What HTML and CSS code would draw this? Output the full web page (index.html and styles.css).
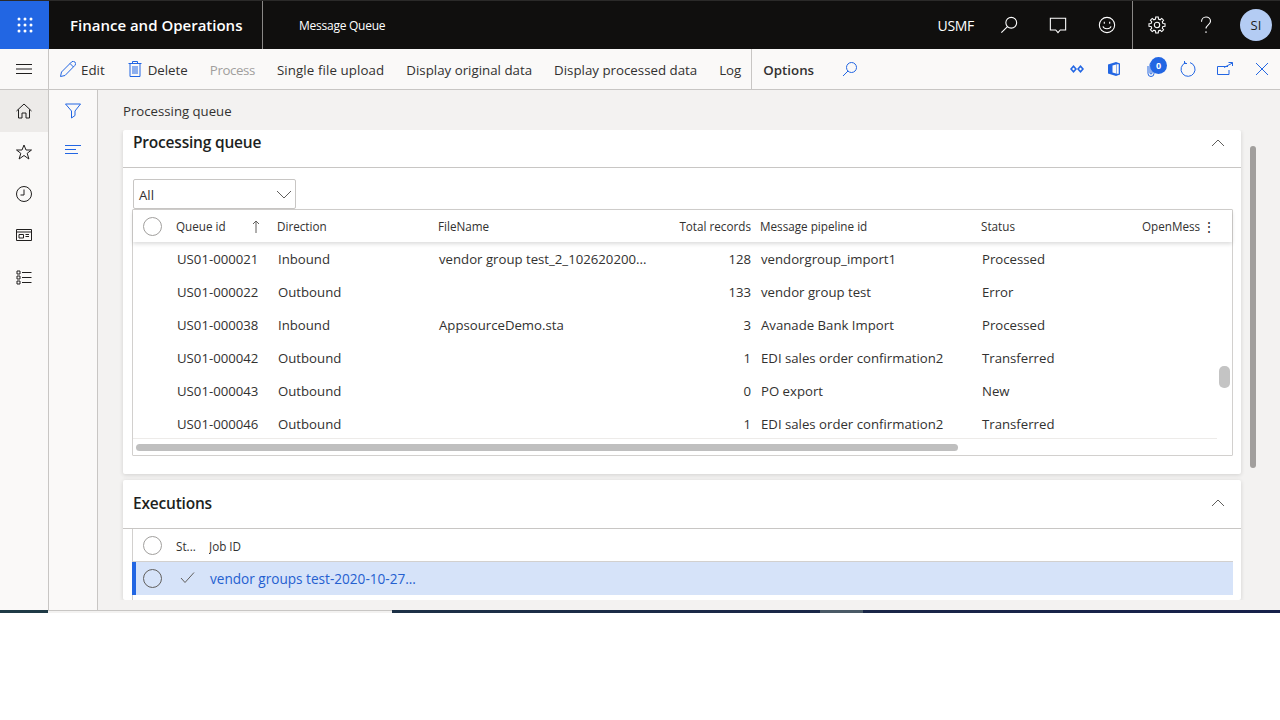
FILE: index.html
```html
<!DOCTYPE html>
<html lang="en">
<head>
    <meta charset="UTF-8">
    <title>Message Queue</title>
    <link rel="stylesheet" href="styles.css">
</head>
<body>
<div class="app">
    <header class="topbar">
        <div class="waffle">
            <svg width="16" height="16" viewBox="0 0 16 16" fill="#fff"><circle cx="2" cy="2" r="1.5"/><circle cx="8" cy="2" r="1.5"/><circle cx="14" cy="2" r="1.5"/><circle cx="2" cy="8" r="1.5"/><circle cx="8" cy="8" r="1.5"/><circle cx="14" cy="8" r="1.5"/><circle cx="2" cy="14" r="1.5"/><circle cx="8" cy="14" r="1.5"/><circle cx="14" cy="14" r="1.5"/></svg>
        </div>
        <div class="brand">Finance and Operations</div>
        <div class="page-name">Message Queue</div>
        <div class="top-right">
            <span class="company">USMF</span>
            <svg class="top-icon" viewBox="0 0 20 20"><circle cx="12.5" cy="7.5" r="6"/><path d="M8.3 11.7 1.5 18.5"/></svg>
            <svg class="top-icon" viewBox="0 0 20 20"><path d="M1.5 2.5h17v13h-6L10 18.5 7.5 15.5h-6z"/></svg>
            <svg class="top-icon" viewBox="0 0 20 20"><circle cx="10" cy="10" r="8.5"/><path d="M5.5 11.5c1 3.5 8 3.5 9 0M7 6.5v2M13 6.5v2"/></svg>
            <div class="top-sep"></div>
            <svg class="top-icon" viewBox="0 0 20 20"><path d="M16.6 8.35 18.9 8.6V11.4L16.6 11.65 15.83 13.5 17.28 15.29 15.29 17.28 13.5 15.83 11.65 16.6 11.4 18.9H8.6L8.35 16.6 6.5 15.83 4.71 17.28 2.72 15.29 4.17 13.5 3.4 11.65 1.1 11.4V8.6L3.4 8.35 4.17 6.5 2.72 4.71 4.71 2.72 6.5 4.17 8.35 3.4 8.6 1.1H11.4L11.65 3.4 13.5 4.17 15.29 2.72 17.28 4.71 15.83 6.5z"/><circle cx="10" cy="10" r="3"/></svg>
            <svg class="top-icon" viewBox="0 0 20 20"><path d="M5 6.5C5 3.5 7.2 1.2 10 1.2s5 2 5 4.6c0 3.9-5 4.2-5 8.2"/><path d="M10 17v2"/></svg>
            <div class="avatar">SI</div>
        </div>
    </header>

    <div class="actionbar">
        <div class="hamburger">
            <svg width="16" height="10" viewBox="0 0 16 10" fill="none" stroke="#201f1e"><path d="M0 .5h16M0 5h16M0 9.500h16"/></svg>
        </div>
        <div class="actions">
            <span class="action">
                <svg class="act-icon" viewBox="0 0 16 16"><path d="M.5 15.500l1-4.500L11.500 1a1.900 1.900 0 0 1 3.400 3.400L5 14.500zM10 2.500l3.500 3.500"/></svg>Edit
            </span>
            <span class="action">
                <svg class="act-icon" viewBox="0 0 16 16"><path d="M1.500 2.500h13M5.500 2.500V.5h5v2M3 2.500v13h10v-13M6 5v8M8 5v8M10 5v8"/></svg>Delete
            </span>
            <span class="action disabled">Process</span>
            <span class="action wide">Single file upload</span>
            <span class="action">Display original data</span>
            <span class="action">Display processed data</span>
            <span class="action log">Log</span>
            <span class="action options">Options</span>
            <svg class="search-icon" viewBox="0 0 16 16"><circle cx="9.500" cy="6.500" r="5"/><path d="M6 10 1 15"/></svg>
        </div>
        <div class="action-right">
            <svg class="right-icon" viewBox="0 0 16 16"><path d="M4.500 4 1 8l3.500 4L8 8zM11.500 4 8 8l3.500 4L15 8z" fill="#2266e3" stroke="none"/><path d="M4.500 6.500 3 8l1.500 1.500L6 8zM11.500 6.500 10 8l1.500 1.500L13 8z" fill="#faf9f8" stroke="none"/></svg>
            <svg class="right-icon" viewBox="0 0 16 16"><path d="M2 3.500 10 1l4 1.500v11L10 15l-8-2.500z" fill="#2266e3" stroke="none"/><path d="M6.500 4.500 10 3.500v9l-3.500-1zM10.500 3.200h2.200v9.600h-2.200z" fill="#faf9f8" stroke="none"/></svg>
            <span class="clip">
                <svg class="right-icon" viewBox="0 0 16 16"><path d="M5 5v7.500a3 3 0 0 0 6 0V3.500a2 2 0 0 0-4 0V12a1 1 0 0 0 2 0V5"/></svg>
                <span class="badge">0</span>
            </span>
            <svg class="right-icon" viewBox="0 0 16 16"><path d="M5.500 1.800a7 7 0 1 0 4.500-.2M4.500 0v2.500H7"/></svg>
            <svg class="right-icon" viewBox="0 0 16 16"><path d="M11 5.500H.5v8H12V9M7 6.500l8.500-4.500M11.500 1.500h4V5"/></svg>
            <svg class="right-icon" viewBox="0 0 16 16"><path d="M2 2l12 12M14 2 2 14"/></svg>
        </div>
    </div>

    <div class="body">
        <nav class="leftnav">
            <div class="nav-item current">
                <svg class="nav-icon" viewBox="0 0 16 16"><path d="M.5 8 8 1l7.500 7M2.500 6.500v8.500h3.500v-5h4v5h3.500V6.500"/></svg>
            </div>
            <div class="nav-item">
                <svg class="nav-icon" viewBox="0 0 16 16"><path d="M8 1l2 5h5.500l-4.300 3.300 1.700 5.700L8 11.500 3.100 15l1.700-5.700L.5 6H6z"/></svg>
            </div>
            <div class="nav-item">
                <svg class="nav-icon" viewBox="0 0 16 16"><circle cx="8" cy="8" r="7.500"/><path d="M8 3.500V9H4.500"/></svg>
            </div>
            <div class="nav-item">
                <svg class="nav-icon" viewBox="0 0 16 16"><path d="M.5 2.500h15v11H.5zM.5 5h15M3 7.500h4.500v3.500H3zM9.500 7.500H13M9.500 9.500H13"/></svg>
            </div>
            <div class="nav-item">
                <svg class="nav-icon" viewBox="0 0 16 16"><path d="M1 2h3v3H1zM1 7h3v3H1zM1 12h3v3H1zM6 3.500h9.500M6 8.500h9.500M6 13.500h9.500"/></svg>
            </div>
        </nav>
        <aside class="filterpane">
            <svg class="pane-icon filter" viewBox="0 0 16 16"><path d="M.5 1h15L10 8v4.500L6.500 15V8z"/></svg>
            <svg class="pane-icon lines" viewBox="0 0 16 10"><path d="M0 .5h16M0 4.500h11M0 8.500h13"/></svg>
        </aside>
        <main class="content">
            <div class="crumb">Processing queue</div>

            <section class="card queue-card">
                <div class="card-head queue-head">
                    <h2>Processing queue</h2>
                    <svg class="chevron" viewBox="0 0 14 8"><path d="M1 7l6-6 6 6"/></svg>
                </div>
                <div class="card-body">
                    <div class="select">
                        <span>All</span>
                        <svg viewBox="0 0 16 9" width="16" height="9" fill="none" stroke="#605e5c"><path d="M1 1l7 7 7-7"/></svg>
                    </div>
                    <div class="grid">
                        <div class="row head-row">
                            <span class="cell check"><i class="radio"></i></span>
                            <span class="cell c-id">Queue id<svg class="sort" width="8" height="13" viewBox="0 0 8 13" fill="none" stroke="#605e5c"><path d="M4 13V1M1 4l3-3 3 3"/></svg></span>
                            <span class="cell c-dir">Direction</span>
                            <span class="cell c-file">FileName</span>
                            <span class="cell c-total">Total records</span>
                            <span class="cell c-pipe">Message pipeline id</span>
                            <span class="cell c-status">Status</span>
                            <span class="cell c-open">OpenMess<b class="dots">⋮</b></span>
                        </div>
                        <div class="row">
                            <span class="cell check"></span>
                            <span class="cell c-id">US01-000021</span>
                            <span class="cell c-dir">Inbound</span>
                            <span class="cell c-file">vendor group test_2_102620200...</span>
                            <span class="cell c-total">128</span>
                            <span class="cell c-pipe">vendorgroup_import1</span>
                            <span class="cell c-status">Processed</span>
                        </div>
                        <div class="row">
                            <span class="cell check"></span>
                            <span class="cell c-id">US01-000022</span>
                            <span class="cell c-dir">Outbound</span>
                            <span class="cell c-file"></span>
                            <span class="cell c-total">133</span>
                            <span class="cell c-pipe">vendor group test</span>
                            <span class="cell c-status">Error</span>
                        </div>
                        <div class="row">
                            <span class="cell check"></span>
                            <span class="cell c-id">US01-000038</span>
                            <span class="cell c-dir">Inbound</span>
                            <span class="cell c-file">AppsourceDemo.sta</span>
                            <span class="cell c-total">3</span>
                            <span class="cell c-pipe">Avanade Bank Import</span>
                            <span class="cell c-status">Processed</span>
                        </div>
                        <div class="row">
                            <span class="cell check"></span>
                            <span class="cell c-id">US01-000042</span>
                            <span class="cell c-dir">Outbound</span>
                            <span class="cell c-file"></span>
                            <span class="cell c-total">1</span>
                            <span class="cell c-pipe">EDI sales order confirmation2</span>
                            <span class="cell c-status">Transferred</span>
                        </div>
                        <div class="row">
                            <span class="cell check"></span>
                            <span class="cell c-id">US01-000043</span>
                            <span class="cell c-dir">Outbound</span>
                            <span class="cell c-file"></span>
                            <span class="cell c-total">0</span>
                            <span class="cell c-pipe">PO export</span>
                            <span class="cell c-status">New</span>
                        </div>
                        <div class="row">
                            <span class="cell check"></span>
                            <span class="cell c-id">US01-000046</span>
                            <span class="cell c-dir">Outbound</span>
                            <span class="cell c-file"></span>
                            <span class="cell c-total">1</span>
                            <span class="cell c-pipe">EDI sales order confirmation2</span>
                            <span class="cell c-status">Transferred</span>
                        </div>
                        <div class="hscroll"><div class="hthumb"></div></div>
                        <div class="vthumb"></div>
                    </div>
                </div>
            </section>

            <section class="card exec-card">
                <div class="card-head exec-head">
                    <h2>Executions</h2>
                    <svg class="chevron" viewBox="0 0 14 8"><path d="M1 7l6-6 6 6"/></svg>
                </div>
                <div class="exec-grid">
                    <div class="row exec-head-row">
                        <span class="cell check"><i class="radio"></i></span>
                        <span class="cell c-st">St...</span>
                        <span class="cell c-job">Job ID</span>
                    </div>
                    <div class="row selected">
                        <span class="cell check"><i class="radio dark"></i></span>
                        <span class="cell c-st">
                            <svg width="15" height="11" viewBox="0 0 15 11" fill="none" stroke="#605e5c"><path d="M1 6l4 4.500L14 .5"/></svg>
                        </span>
                        <span class="cell c-job link">vendor groups test-2020-10-27...</span>
                    </div>
                </div>
            </section>
            <div class="page-scroll"></div>
        </main>
    </div>
</div>
<div class="taskstrip">
    <div class="strip-light"></div>
    <div class="strip-dark"><div class="strip-thumb"></div></div>
</div>
</body>
</html>
```

FILE: styles.css
```css
/* Page */
* {
    box-sizing: border-box;
}

body {
    margin: 0;
    background: #fff;
    font-family: "Open Sans", "Noto Sans", sans-serif;
    font-size: 13.2px;
    color: #323130;
}

.app {
    height: 610px;
    display: flex;
    flex-direction: column;
    overflow: hidden;
}

/* Top bar */
.topbar {
    height: 49px;
    flex: none;
    display: flex;
    align-items: center;
    background: #100f0e;
    border-top: 1px solid #2b2a29;
    color: #fff;
}

.waffle {
    width: 49px;
    height: 48px;
    display: flex;
    align-items: center;
    justify-content: center;
    background: #2266e3;
}

.brand {
    width: 214px;
    height: 48px;
    line-height: 48px;
    padding-left: 21px;
    border-right: 1px solid #8a8886;
    font-size: 15px;
    font-weight: 600;
}

.page-name {
    margin-left: 36px;
    font-size: 12px;
    letter-spacing: -0.25px;
}

.top-right {
    margin-left: auto;
    height: 48px;
    display: flex;
    align-items: center;
}

.company {
    margin-right: 26px;
    font-size: 14px;
    letter-spacing: -0.3px;
}

.top-icon {
    width: 18px;
    height: 18px;
    margin-right: 31px;
    fill: none;
    stroke: #fff;
    stroke-width: 1.2;
}

.top-sep {
    width: 1px;
    height: 48px;
    background: #8a8886;
    margin: 0 15px 0 -15px;
}

.avatar {
    width: 32px;
    height: 32px;
    margin: 0 8px 0 -6px;
    border-radius: 50%;
    background: #b4ccf4;
    color: #201f1e;
    font-size: 13px;
    line-height: 32px;
    text-align: center;
}

/* Action bar */
.actionbar {
    height: 41px;
    flex: none;
    display: flex;
    align-items: center;
    background: #faf9f8;
    border-bottom: 1px solid #c8c6c4;
}

.hamburger {
    width: 49px;
    height: 40px;
    display: flex;
    align-items: center;
    justify-content: center;
    border-right: 1px solid #c8c6c4;
}

.actions {
    display: flex;
    align-items: center;
    height: 40px;
    padding-left: 11px;
    font-size: 13.3px;
}

.action {
    display: flex;
    align-items: center;
    padding-top: 2px;
    margin-right: 22px;
    color: #323130;
    white-space: nowrap;
}

.action.disabled {
    color: #a19f9d;
    letter-spacing: -0.4px;
}

.action.wide {
    letter-spacing: 0.1px;
}

.action.log {
    margin-right: 21px;
}

.action.options {
    height: 40px;
    padding-left: 11px;
    margin-left: -11px;
    border-left: 1px solid #c8c6c4;
    font-weight: 600;
    margin-right: 28px;
}

.act-icon {
    width: 16px;
    height: 16px;
    margin-top: -2px;
    margin-right: 5px;
    fill: none;
    stroke: #2266e3;
}

.search-icon {
    width: 16px;
    height: 16px;
    fill: none;
    stroke: #2266e3;
}

.action-right {
    margin-left: auto;
    display: flex;
    align-items: center;
    padding-right: 10px;
}

.right-icon {
    width: 16px;
    height: 16px;
    margin-left: 21px;
    fill: none;
    stroke: #2266e3;
}

.clip {
    position: relative;
    display: flex;
}

.badge {
    position: absolute;
    top: -4px;
    right: -8px;
    width: 17px;
    height: 17px;
    border-radius: 50%;
    background: #2266e3;
    color: #fff;
    font-size: 9px;
    font-weight: 700;
    line-height: 17px;
    text-align: center;
}

/* Body columns */
.body {
    flex: 1;
    display: flex;
    min-height: 0;
}

.leftnav {
    width: 49px;
    flex: none;
    background: #faf9f8;
    border-right: 1px solid #c8c6c4;
}

.nav-item {
    height: 41.5px;
    display: flex;
    align-items: center;
    justify-content: center;
}

.nav-item.current {
    background: #edebe9;
}

.nav-icon {
    width: 16px;
    height: 16px;
    fill: none;
    stroke: #201f1e;
}

.filterpane {
    width: 49px;
    flex: none;
    display: flex;
    flex-direction: column;
    align-items: center;
    padding-top: 13px;
    background: #faf9f8;
    border-right: 1px solid #c8c6c4;
}

.pane-icon {
    width: 16px;
    fill: none;
    stroke: #2266e3;
}

.pane-icon.filter {
    height: 16px;
    margin-bottom: 26px;
}

.pane-icon.lines {
    height: 10px;
}

/* Content */
.content {
    position: relative;
    flex: 1;
    min-width: 0;
    padding: 0 39px 0 25px;
    background: #f3f2f1;
}

.crumb {
    height: 40px;
    padding-top: 11px;
    line-height: 20px;
}

.card {
    background: #fff;
    box-shadow: 0 1px 4px rgba(0, 0, 0, 0.14);
    border-radius: 2px;
}

.queue-card {
    height: 344px;
    margin-bottom: 6px;
    clip-path: inset(0 -5px -5px -5px);
}

.exec-card {
    height: 120px;
    overflow: hidden;
    clip-path: inset(-5px -5px 0 -5px);
}

.card-head {
    display: flex;
    align-items: center;
    justify-content: space-between;
    padding: 0 16px 0 10px;
    border-bottom: 1px solid #c8c6c4;
}

.card-head h2 {
    margin: 0;
    font-size: 15.5px;
    font-weight: 600;
    color: #201f1e;
    letter-spacing: -0.2px;
}

.queue-head {
    height: 38px;
    align-items: flex-start;
    padding-top: 1px;
}

.queue-head .chevron {
    margin-top: 8px;
}

.exec-head {
    height: 49px;
    padding-bottom: 2px;
}

.chevron {
    width: 14px;
    height: 8px;
    fill: none;
    stroke: #605e5c;
}

.card-body {
    padding: 11px 8px 0 9px;
}

.select {
    width: 163px;
    height: 30px;
    margin-left: 1px;
    padding: 1px 3px 0 5px;
    display: flex;
    align-items: center;
    justify-content: space-between;
    border: 1px solid #c8c6c4;
    border-radius: 2px;
}

/* Grids */
.grid {
    position: relative;
    height: 247px;
    border: 1px solid #d2d0ce;
    border-radius: 1px;
}

.row {
    height: 33px;
    display: flex;
    align-items: center;
    white-space: nowrap;
}

.head-row {
    height: 32px;
    font-size: 11.7px;
    box-shadow: 0 2px 4px rgba(0, 0, 0, 0.14);
}

.cell {
    flex: none;
    display: block;
    overflow: hidden;
}

.check {
    width: 43px;
    padding-left: 10px;
    display: flex;
    align-items: center;
}

.radio {
    display: block;
    width: 19px;
    height: 19px;
    border: 1px solid #a19f9d;
    border-radius: 50%;
    background: #fff;
}

.radio.dark {
    border-color: #605e5c;
    background: transparent;
}

.c-id {
    width: 101px;
}

.head-row .c-id {
    display: flex;
    align-items: center;
}

.sort {
    margin-left: 26px;
}

.c-dir {
    width: 161px;
}

.c-file {
    width: 222px;
}

.c-total {
    width: 91px;
    text-align: right;
}

.c-pipe {
    width: 221px;
    margin-left: 9px;
}

.c-status {
    width: 161px;
}

.c-open {
    display: flex;
    align-items: center;
    overflow: visible;
}

.dots {
    margin-left: 2px;
    font-weight: 400;
    font-size: 14px;
}

.row:not(.head-row) .c-id,
.row:not(.head-row) .c-dir,
.row:not(.head-row) .c-file,
.row:not(.head-row) .c-pipe,
.row:not(.head-row) .c-status {
    padding-left: 1px;
}

.hscroll {
    position: absolute;
    left: 0;
    right: 15px;
    bottom: 0;
    height: 17px;
    padding-top: 5px;
    padding-left: 3px;
    background: #fff;
    border-top: 1px solid #edebe9;
}

.hthumb {
    width: 822px;
    height: 7px;
    border-radius: 4px;
    background: #bfbfbf;
}

.vthumb {
    position: absolute;
    top: 156px;
    right: 2px;
    width: 11px;
    height: 22px;
    border-radius: 5px;
    background: #c4c4c4;
}

.exec-grid {
    height: 71px;
    margin: 0 8px 0 9px;
    border-left: 1px solid #d2d0ce;
}

.exec-head-row {
    height: 33px;
    padding-top: 1px;
    font-size: 11.7px;
    border-bottom: 1px solid #d2d0ce;
}

.c-st {
    width: 33px;
}

.c-job {
    width: 300px;
}

.selected {
    background: #d6e3f9;
    margin-left: -1px;
    border-left: 4px solid #2266e3;
}

.selected .check {
    width: 40px;
    padding-left: 7px;
}

.selected .c-st {
    padding-left: 4px;
    padding-bottom: 3px;
    display: flex;
    align-items: center;
}

.link {
    color: #2560d0;
    padding-left: 1px;
    font-size: 13.6px;
}

.page-scroll {
    position: absolute;
    top: 56px;
    right: 24px;
    width: 6px;
    height: 322px;
    border-radius: 3px;
    background: #a19f9d;
}

/* Strip under the app */
.taskstrip {
    height: 3px;
    display: flex;
    background: linear-gradient(90deg, #1f3b46, #1a2747 60%, #16204a);
}

.strip-light {
    width: 344px;
    margin-left: 48px;
    background: #f3f2f1;
    border-top: 1px solid #c8c6c4;
}

.strip-dark {
    flex: 1;
    position: relative;
}

.strip-thumb {
    position: absolute;
    left: 428px;
    width: 43px;
    height: 3px;
    background: #4a5a66;
}
```
